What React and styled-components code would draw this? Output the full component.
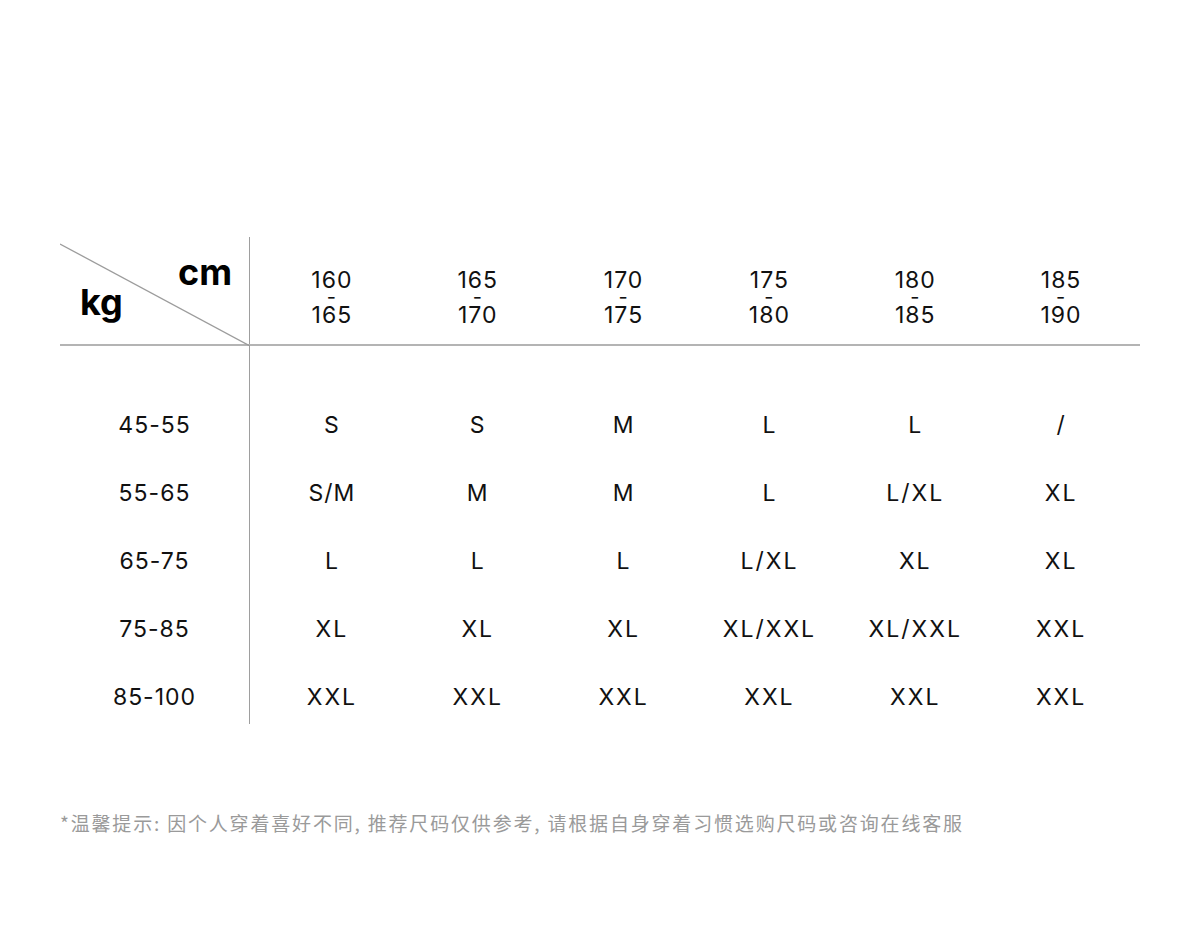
import styled, { createGlobalStyle } from "styled-components";

const GlobalStyle = createGlobalStyle`
  body {
    margin: 0;
    background: #fff;
    font-family: Inter, "Noto Sans", sans-serif;
    color: #111;
  }
`;

const heights = ["160", "165", "170", "175", "180", "185", "190"];

const rows = [
  { kg: "45-55", sizes: ["S", "S", "M", "L", "L", "/"] },
  { kg: "55-65", sizes: ["S/M", "M", "M", "L", "L/XL", "XL"] },
  { kg: "65-75", sizes: ["L", "L", "L", "L/XL", "XL", "XL"] },
  { kg: "75-85", sizes: ["XL", "XL", "XL", "XL/XXL", "XL/XXL", "XXL"] },
  { kg: "85-100", sizes: ["XXL", "XXL", "XXL", "XXL", "XXL", "XXL"] },
];

const Page = styled.div`
  width: 1200px;
  padding-top: 237px;
  padding-left: 60px;
  box-sizing: border-box;
`;

const Table = styled.div`
  width: 1080px;
`;

const Header = styled.div`
  display: flex;
  height: 109px;
  box-sizing: border-box;
  border-bottom: 2px solid #b4b4b4;
`;

const Corner = styled.div`
  position: relative;
  width: 190px;
  flex: none;
  box-sizing: border-box;
  border-right: 1px solid #9e9e9e;
`;

const Diagonal = styled.svg`
  position: absolute;
  left: 0;
  top: 0;
`;

const Unit = styled.span`
  position: absolute;
  font-family: Inter, sans-serif;
  font-weight: 700;
  font-size: 36px;
  line-height: 1;
  color: #000;
  ${(p) => (p.$corner === "top" ? "right: 17px; top: 17px;" : "left: 20px; top: 47px;")}
`;

const Columns = styled.div`
  flex: 1;
  display: grid;
  grid-template-columns: repeat(6, 1fr);
  padding: 0 6px 0 9px;
`;

const HeadCell = styled.div`
  display: flex;
  flex-direction: column;
  align-items: center;
  padding-top: 31px;
  font-size: 23px;
  line-height: 24px;
  letter-spacing: 1px;
  color: #111;
`;

const Dash = styled.span`
  display: block;
  font-size: 20px;
  line-height: 11px;
  height: 11px;
`;

const Body = styled.div`
  display: flex;
  height: 378px;
`;

const LabelCol = styled.div`
  width: 190px;
  flex: none;
  box-sizing: border-box;
  border-right: 1px solid #9e9e9e;
  padding-top: 45px;
`;

const DataCol = styled.div`
  flex: 1;
  padding: 45px 6px 0 9px;
`;

const Row = styled.div`
  display: grid;
  grid-template-columns: repeat(6, 1fr);
  height: 68px;
`;

const Cell = styled.div`
  height: 68px;
  display: flex;
  align-items: center;
  justify-content: center;
  font-size: 23px;
  letter-spacing: ${(p) => (p.$wide ? "2px" : "1px")};
  color: #111;
`;

const Note = styled.p`
  margin: 85px 0 0;
  font-family: "Noto Sans CJK SC", "Noto Sans", sans-serif;
  font-size: 19px;
  letter-spacing: 1.82px;
  color: #9a9a9a;
  white-space: nowrap;
`;

export default function App() {
  return (
    <>
      <GlobalStyle />
      <Page>
        <Table>
          <Header>
            <Corner>
              <Diagonal width="190" height="109" viewBox="0 0 190 109">
                <line x1="0" y1="7" x2="190" y2="109" stroke="#9c9c9c" strokeWidth="1.3" />
              </Diagonal>
              <Unit $corner="top">cm</Unit>
              <Unit $corner="bottom">kg</Unit>
            </Corner>
            <Columns>
              {heights.slice(0, 6).map((h, i) => (
                <HeadCell key={h}>
                  <span>{h}</span>
                  <Dash>-</Dash>
                  <span>{heights[i + 1]}</span>
                </HeadCell>
              ))}
            </Columns>
          </Header>
          <Body>
            <LabelCol>
              {rows.map((r) => (
                <Cell key={r.kg}>{r.kg}</Cell>
              ))}
            </LabelCol>
            <DataCol>
              {rows.map((r) => (
                <Row key={r.kg}>
                  {r.sizes.map((s, i) => (
                    <Cell key={i} $wide={/X/.test(s)}>
                      {s}
                    </Cell>
                  ))}
                </Row>
              ))}
            </DataCol>
          </Body>
        </Table>
        <Note>*温馨提示: 因个人穿着喜好不同, 推荐尺码仅供参考, 请根据自身穿着习惯选购尺码或咨询在线客服</Note>
      </Page>
    </>
  );
}
